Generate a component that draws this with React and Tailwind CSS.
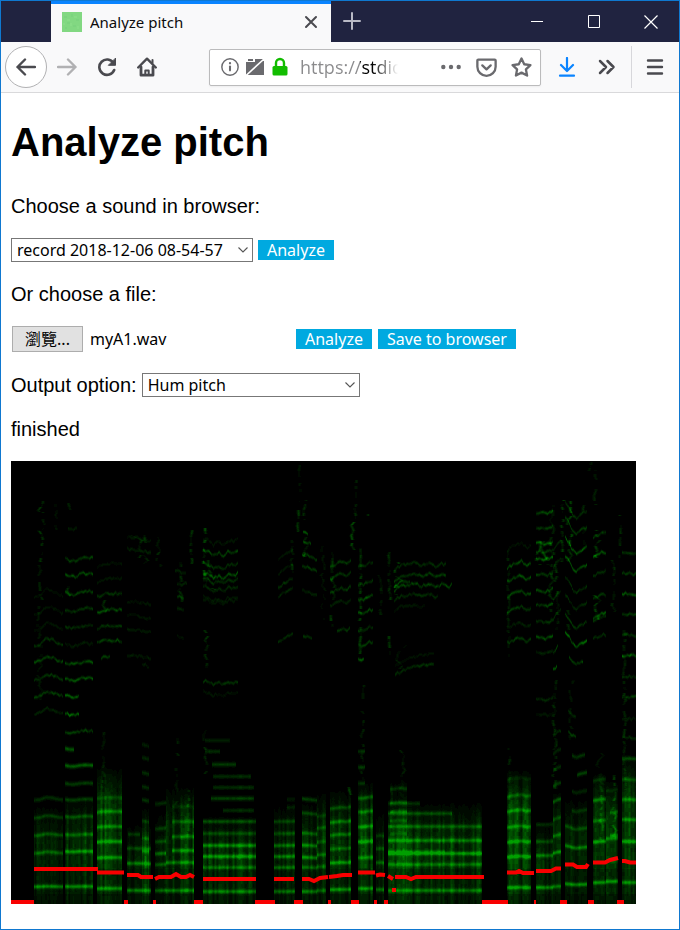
import { useMemo, useRef } from "react";

/* ---------- spectrogram ---------- */

const W = 625;
const H = 443;
const LEFT = 11;
const TOP = 461;
const CELL = 1;

// Each voice: x range, contour of the pitch (offsets along the note), haze level,
// top of the haze, and its harmonics as [y, strength, from?, to?].
const VOICES = [
  { x: [34, 63], c: [5, 3, -3, -2, 2, 4], haze: 0.2, top: 832, h: [[886, 0.75], [852, 0.5], [834, 0.45], [816, 0.35], [798, 0.3], [710, 0.16], [693, 0.3], [676, 0.3], [658, 0.34], [641, 0.25], [625, 0.1], [609, 0.1], [592, 0.08]] },
  { x: [65, 93], c: [0, 2, 2, 0, -1, -1, 0], haze: 0.3, top: 825, h: [[886, 0.75], [851, 0.8], [834, 0.5], [816, 0.45], [799, 0.4], [783, 0.4], [765, 0.65], [748, 0.6, 65, 74], [731, 0.3], [713, 0.5, 65, 79], [695, 0.45, 65, 79], [678, 0.42], [662, 0.38], [644, 0.14], [626, 0.22], [609, 0.28], [592, 0.3], [574, 0.38], [558, 0.3], [526, 0.16, 68, 77]] },
  { x: [97, 122], c: [3, 1, 0, 0, 0, 1], haze: 0.36, top: 795, h: [[888, 0.75], [857, 0.7], [841, 0.8], [826, 0.6], [811, 0.6], [797, 0.25], [656, 0.3, 101, 110], [640, 0.32], [625, 0.25], [609, 0.36], [593, 0.25], [578, 0.12], [563, 0.1]] },
  { x: [127, 151], c: [-1, -1, 0, 1, 2], haze: 0.17, top: 850, h: [[890, 0.65], [863, 0.6], [848, 0.35], [834, 0.3, 128, 140], [602, 0.12], [616, 0.12], [630, 0.14], [656, 0.14], [550, 0.16], [538, 0.13]] },
  { x: [142, 149], c: [-2, 2], haze: 0.34, top: 835, h: [[851, 0.5], [838, 0.4], [821, 0.3], [800, 0.35], [787, 0.3], [773, 0.3], [758, 0.25], [745, 0.2], [665, 0.15]] },
  { x: [155, 166], c: [2, 0, -2], haze: 0.2, top: 838, h: [[890, 0.6], [864, 0.5], [853, 0.6], [841, 0.4], [828, 0.35], [803, 0.3]] },
  { x: [166, 194], c: [2, 1, 0, 1, -1, 2], haze: 0.33, top: 815, h: [[890, 0.7], [862, 0.65], [850, 0.7, 172, 194], [836, 0.55, 172, 194], [821, 0.45, 172, 194], [806, 0.2, 172, 194], [571, 0.2, 175, 186], [583, 0.18, 177, 187], [596, 0.25, 177, 184], [608, 0.16, 177, 184], [636, 0.1, 177, 184]] },
  { x: [203, 256], c: [0, 0, 0, 0, 0, 0], haze: 0.32, top: 844, h: [[891, 0.65], [867, 0.5], [856, 0.8], [845, 0.75], [833, 0.4], [821, 0.5], [810, 0.3, 223, 254], [798, 0.45, 211, 254], [787, 0.3, 213, 254], [776, 0.3, 213, 251], [764, 0.4, 212, 236], [751, 0.3, 205, 220], [740, 0.22, 205, 230]] },
  { x: [203, 238], c: [-2, -1, 3, 0, 3, -1, 0, -2], haze: 0, top: 890, h: [[541, 0.12], [552, 0.32], [565, 0.25], [575, 0.42], [580, 0.24], [588, 0.2], [598, 0.13], [601, 0.1], [682, 0.26], [693, 0.1]] },
  { x: [274, 295], c: [1, 0, 0, -1], haze: 0.25, top: 832, h: [[891, 0.6], [867, 0.55], [856, 0.7], [845, 0.6], [833, 0.4], [821, 0.4], [807, 0.2, 287, 295], [799, 0.17, 287, 295]] },
  { x: [278, 293], c: [7, 3, 0, -2], haze: 0, top: 890, h: [[580, 0.25], [590, 0.2], [566, 0.12], [551, 0.12], [635, 0.2]] },
  { x: [302, 317], c: [-2, 0, 3], haze: 0.28, top: 830, h: [[891, 0.65], [867, 0.45], [857, 0.7], [845, 0.65], [833, 0.5], [813, 0.4], [799, 0.42], [637, 0.28, 303, 312], [592, 0.17], [568, 0.28], [556, 0.26], [543, 0.37, 303, 311], [534, 0.3, 303, 308]] },
  { x: [317, 326], c: [3, -1], haze: 0.33, top: 820, h: [[890, 0.5], [866, 0.4], [854, 0.5], [841, 0.35], [827, 0.4], [815, 0.25]] },
  { x: [330, 351], c: [4, 2, -1, 1, -3], haze: 0.29, top: 817, h: [[889, 0.8], [862, 0.8], [848, 0.45], [834, 0.5], [821, 0.6], [807, 0.4], [562, 0.26], [574, 0.28], [588, 0.25], [601, 0.16], [629, 0.27, 337, 350]] },
  { x: [358, 373], c: [2, 2, -1, -2], haze: 0.36, top: 810, h: [[888, 0.7], [857, 0.6], [841, 0.85], [826, 0.65], [811, 0.55], [797, 0.5], [782, 0.3, 358, 365], [766, 0.35, 358, 365], [750, 0.3, 358, 365], [564, 0.22], [582, 0.27], [597, 0.42], [611, 0.36], [628, 0.25], [643, 0.28], [657, 0.4, 358, 364]] },
  { x: [376, 384], c: [2, 0, 2], haze: 0.24, top: 840, h: [[889, 0.6], [862, 0.5], [848, 0.4], [835, 0.3]] },
  { x: [388, 482], c: [0, 0, 0, 0, 0], haze: 0.37, top: 830, h: [[890, 0.65], [864, 0.55], [853, 0.85], [851, 0.35, 388, 445], [840, 0.65], [826, 0.5], [813, 0.45, 388, 452], [803, 0.28, 388, 420]] },
  { x: [390, 407], c: [3, -1, 1], haze: 0.14, top: 805, h: [[788, 0.3], [802, 0.35], [811, 0.4], [820, 0.3], [833, 0.25]] },
  { x: [394, 455], c: [5, 0, 0, -2, 1, -2, 2, -1, 1, -3], haze: 0, top: 890, h: [[564, 0.22, 394, 446], [575, 0.31, 394, 446], [581, 0.3, 394, 410], [585, 0.34, 394, 452], [595, 0.23, 394, 438], [606, 0.12, 394, 425]] },
  { x: [395, 434], c: [10, 5, 1, -1, -3, -2], haze: 0, top: 890, h: [[666, 0.26], [656, 0.1]] },
  { x: [507, 531], c: [4, 1, -1, -2, 2, 0], haze: 0.36, top: 798, h: [[887, 0.8], [856, 0.8], [841, 0.7], [826, 0.6], [810, 0.55], [795, 0.4], [778, 0.14], [563, 0.36], [577, 0.4], [592, 0.36], [608, 0.3], [624, 0.15], [639, 0.33], [545, 0.1]] },
  { x: [536, 553], c: [0, 0, 1, 0, -2], haze: 0.28, top: 852, h: [[887, 0.75], [855, 0.6], [841, 0.4], [824, 0.28], [699, 0.18], [714, 0.1], [512, 0.36], [527, 0.3], [543, 0.45], [551, 0.26], [558, 0.5], [574, 0.34], [590, 0.33], [605, 0.32], [621, 0.25], [637, 0.42], [652, 0.18]] },
  { x: [553, 561], c: [4, -2, -5], haze: 0.35, top: 818, h: [[886, 0.7], [852, 0.8], [835, 0.6], [818, 0.4], [800, 0.55], [784, 0.4], [768, 0.3], [751, 0.25], [733, 0.2], [666, 0.4, 553, 557], [648, 0.32, 553, 558], [614, 0.22], [596, 0.2], [562, 0.18], [545, 0.18]] },
  { x: [565, 587], c: [-10, -6, 1, 4, 1, -1, -3], haze: 0.24, top: 826, h: [[884, 0.8], [847, 0.65], [828, 0.4], [810, 0.3, 572, 587], [791, 0.25, 572, 587], [773, 0.45, 577, 587], [755, 0.35, 572, 585], [735, 0.35, 568, 576], [714, 0.18, 568, 576], [513, 0.24], [529, 0.28], [549, 0.42], [567, 0.4], [588, 0.24], [605, 0.2], [624, 0.28], [642, 0.48], [661, 0.35, 569, 583]] },
  { x: [593, 606], c: [3, 1, -1, -1], haze: 0.26, top: 801, h: [[882, 0.75], [841, 0.75], [820, 0.5], [799, 0.6], [779, 0.25], [533, 0.3], [553, 0.42], [572, 0.26], [595, 0.28], [614, 0.48], [617, 0.28], [635, 0.2]] },
  { x: [606, 618], c: [1, 0, -3], haze: 0.3, top: 808, h: [[881, 0.8], [861, 0.3], [838, 0.55], [835, 0.5, 610, 618], [812, 0.45, 610, 618], [790, 0.2]] },
  { x: [622, 636], c: [0, 0, 1], haze: 0.32, top: 785, h: [[882, 0.75], [841, 0.9], [819, 0.65], [799, 0.6], [779, 0.4], [758, 0.45], [737, 0.2], [718, 0.14], [696, 0.28], [552, 0.25], [573, 0.3], [593, 0.4], [614, 0.32], [634, 0.33], [655, 0.5], [676, 0.22]] },
];

// Thin wandering traces: [x, yTop, yBottom, width, strength]
const STREAKS = [
  [40, 498, 512, 6, 0.3], [43, 512, 530, 3, 0.2], [40, 530, 562, 6, 0.34], [40, 565, 600, 5, 0.22],
  [39, 605, 700, 5, 0.14], [68, 503, 512, 4, 0.22], [56, 500, 530, 3, 0.16], [68, 586, 596, 3, 0.34],
  [104, 600, 618, 5, 0.3], [103, 730, 795, 3, 0.2], [136, 535, 560, 12, 0.24], [144, 535, 565, 8, 0.22],
  [158, 537, 568, 6, 0.28], [176, 735, 805, 4, 0.2], [188, 790, 835, 3, 0.26], [180, 562, 602, 6, 0.28],
  [191, 530, 573, 2, 0.3], [204, 528, 585, 3, 0.46], [206, 630, 668, 4, 0.3], [205, 730, 780, 5, 0.22],
  [211, 560, 590, 12, 0.28], [297, 510, 532, 3, 0.36], [299, 462, 505, 3, 0.14], [304, 500, 520, 4, 0.22],
  [305, 530, 557, 5, 0.5], [292, 535, 575, 4, 0.25], [333, 550, 600, 5, 0.34], [332, 615, 627, 4, 0.38],
  [353, 508, 550, 5, 0.42], [355, 475, 507, 3, 0.22], [360, 548, 660, 2, 0.34], [379, 575, 615, 4, 0.22],
  [367, 514, 518, 5, 0.25], [323, 540, 620, 5, 0.12], [349, 787, 795, 3, 0.36], [389, 550, 600, 3, 0.28],
  [389, 635, 655, 2, 0.34], [397, 562, 595, 9, 0.45], [401, 645, 675, 14, 0.16], [391, 780, 830, 3, 0.2],
  [402, 750, 800, 6, 0.2], [362, 685, 780, 5, 0.18], [508, 550, 660, 3, 0.24], [509, 748, 800, 3, 0.24],
  [538, 541, 565, 8, 0.38], [545, 541, 565, 8, 0.38], [551, 505, 620, 5, 0.26], [562, 500, 562, 3, 0.4],
  [556, 560, 630, 4, 0.3], [569, 500, 562, 5, 0.4], [584, 505, 545, 6, 0.24], [567, 610, 630, 4, 0.34],
  [595, 470, 505, 3, 0.22], [589, 462, 475, 4, 0.16], [597, 530, 560, 5, 0.36], [597, 595, 620, 7, 0.38],
  [620, 515, 560, 2, 0.3], [613, 560, 615, 4, 0.22], [554, 680, 790, 4, 0.26], [571, 680, 740, 6, 0.15],
  [601, 775, 840, 3, 0.34], [614, 775, 840, 4, 0.34], [624, 630, 790, 3, 0.24], [600, 752, 785, 8, 0.14],
];

const PITCH = [
  "M34 869H96V867", "M97 872.5H124", "M127 875H138L141 877H153",
  "M155 879L159 877L171 877L176 874L181 877H186L190 875L194 877",
  "M203 879H256", "M274 879H294", "M302 879H309L314 881L320 878L328 877",
  "M329 877L337 876L343 875H352", "M358 872.5H375", "M376 875.5L380 874.5L385 875",
  "M388 876L393 879", "M395 877H406L411 879L416 877H484", "M507 872.5H516L519 871L523 873H534",
  "M536 871H551L556 868.5H561", "M565 864.5H573L577 867H586L588 864",
  "M593 862.5H605L610 860L618 858", "M622 861H625L630 862.5H636",
];

const RESTS = [
  [11, 34], [124, 128], [153, 156], [194, 203], [255, 275], [294, 303], [328, 331], [351, 359],
  [374, 377], [384, 388], [482, 508], [534, 536], [560, 567], [588, 594], [617, 624],
];

function hash(a, b) {
  const n = Math.sin(a * 12.9898 + b * 78.233) * 43758.5453;
  return n - Math.floor(n);
}

// Hash values blended between neighbouring two-pixel columns.
function noise(x, b) {
  const p = x / 2;
  const i = Math.floor(p);
  return hash(i, b) + (hash(i + 1, b) - hash(i, b)) * (p - i);
}

function contourAt(points, t) {
  const p = t * (points.length - 1);
  const i = Math.min(points.length - 2, Math.floor(p));
  return points[i] + (points[i + 1] - points[i]) * (p - i);
}

function buildLevels() {
  const cols = Math.ceil(W / CELL);
  const grid = new Float32Array(cols * H);
  const add = (col, row, v) => {
    if (col >= 0 && col < cols && row >= 0 && row < H) grid[row * cols + col] += v;
  };

  VOICES.forEach(({ x: [x0, x1], c, haze, top, h }, vi) => {
    for (let x = x0; x < x1; x += CELL) {
      const col = Math.floor((x - LEFT) / CELL);
      const t = (x - x0) / (x1 - x0);
      const column = noise(col, vi);
      for (let y = top - 30; haze > 0 && y < 904; y++) {
        const fade = Math.min(1, Math.max(0, (y - top + 30) / 40));
        const belly = y > 893 ? 0.5 : y > 868 ? 0.75 : 1;
        add(col, y - TOP, haze * 1.25 * fade * belly * (0.3 + 0.9 * column) * (0.75 + 0.4 * noise(col, y >> 2)));
      }
      h.forEach(([y, strength, from = x0, to = x1], hi) => {
        if (x < from || x >= to) return;
        const high = y < 740;
        const scale = Math.min(1.15, (904 - y) / 300);
        const centre = y + contourAt(c, t) * scale + (high ? (noise(col, hi) - 0.5) * 2.4 : 0);
        const gate = high ? 0.6 + 0.7 * noise(col + 31, hi + vi) : 0.8 + 0.3 * column;
        const spread = high ? 1.5 : 2;
        for (let r = -5; r <= 5; r++) {
          const row = Math.round(centre) + r;
          const d = (row - centre) / spread;
          add(col, row - TOP, strength * gate * (high ? 1.05 : 0.88) * Math.exp(-d * d));
        }
      });
    }
  });

  STREAKS.forEach(([x, y0, y1, w, strength], si) => {
    for (let y = y0; y < y1; y++) {
      const step = y / 5;
      const i = Math.floor(step);
      const wander = hash(si, i) + (hash(si, i + 1) - hash(si, i)) * (step - i);
      const glow = Math.max(0, hash(si + 50, Math.floor(y / 3)) - 0.2) * 1.3;
      const centre = x - LEFT + (wander - 0.5) * w;
      for (let dx = -3; dx <= 3; dx++) {
        const col = Math.round(centre) + dx;
        const d = (col - centre) / 1.4;
        add(col, y - TOP, strength * glow * Math.exp(-d * d));
      }
    }
  });

  const paths = Array.from({ length: 17 }, () => "");
  for (let row = 0; row < H; row++) {
    let col = 0;
    while (col < cols) {
      const level = Math.min(16, Math.round(grid[row * cols + col] * 16));
      let end = col + 1;
      while (end < cols && Math.min(16, Math.round(grid[row * cols + end] * 16)) === level) end++;
      if (level > 0) paths[level] += `M${col * CELL} ${row}h${(end - col) * CELL}v1H${col * CELL}z`;
      col = end;
    }
  }
  return paths;
}

function Spectrogram() {
  const levels = useMemo(buildLevels, []);
  return (
    <svg
      viewBox={`0 0 ${W} ${H}`}
      className="block h-auto w-[625px] max-w-full bg-black"
      role="img"
      aria-label="Spectrogram"
    >
      <g shapeRendering="crispEdges">
        {levels.map((d, i) => d && <path key={i} d={d} fill={`rgb(0,${i * 10},0)`} />)}
      </g>
      <g transform={`translate(${-LEFT} ${-TOP})`}>
        <g fill="none" stroke="#f80000" strokeWidth="4">
          {PITCH.map((d) => <path key={d} d={d} />)}
        </g>
        <g fill="#f80000">
          {RESTS.map(([a, b]) => <rect key={a} x={a} y="900" width={b - a} height="4" />)}
          <rect x="392" y="888" width="4" height="4" />
        </g>
      </g>
    </svg>
  );
}

/* ---------- icons ---------- */

function Icon({ size = 20, className = "", children }) {
  return (
    <svg
      width={size}
      height={size}
      viewBox="0 0 20 20"
      fill="none"
      stroke="currentColor"
      strokeWidth="2"
      strokeLinecap="round"
      strokeLinejoin="round"
      className={`shrink-0 ${className}`}
      aria-hidden="true"
    >
      {children}
    </svg>
  );
}

function ToolButton({ label, className = "text-[#4a4a4f]", children }) {
  return (
    <button type="button" aria-label={label} className={`flex h-10 w-10 shrink-0 items-center justify-center ${className}`}>
      {children}
    </button>
  );
}

function TitleBar() {
  return (
    <div className="flex h-[41px] items-stretch bg-[#202340] pl-[50px]">
      <div className="flex w-[280px] items-center border-t-[3px] border-[#0a84ff] bg-[#f9f9fa] pr-[10px] pb-[3px] pl-[11px]">
        <svg width="20" height="20" viewBox="0 0 20 20" className="shrink-0" aria-hidden="true">
          <rect width="20" height="20" fill="#82d882" />
          <path d="M2 4h3v2H2zM9 2h2v3H9zM14 7h3v2h-3zM5 10h3v2H5zM11 13h3v2h-3zM3 15h2v2H3z" fill="#7cd47f" />
          <path d="M5 7h3v2H5zM12 4h3v2h-3zM8 11h2v3H8zM15 14h2v3h-2zM1 11h2v2H1z" fill="#88dc87" />
        </svg>
        <span className="ml-2 flex-1 truncate font-['Noto_Sans',sans-serif] text-[15px] leading-5 text-[#0c0c0d]">Analyze pitch</span>
        <button type="button" aria-label="Close tab" className="text-[#4a4a4f]">
          <Icon><path d="M5 5l10 10M15 5L5 15" /></Icon>
        </button>
      </div>
      <button type="button" aria-label="New tab" className="w-[42px] pb-[2px] pl-[11px] text-[#b9bac6]">
        <Icon><path d="M10 2v16M2 10h16" /></Icon>
      </button>
      <div className="ml-auto flex">
        <button type="button" aria-label="Minimize" className="flex w-[57px] items-center justify-center text-white">
          <svg width="12" height="12" viewBox="0 0 12 12" aria-hidden="true"><path d="M0 5.5h12" stroke="currentColor" /></svg>
        </button>
        <button type="button" aria-label="Maximize" className="flex w-[57px] items-center justify-center text-white">
          <svg width="12" height="13" viewBox="0 0 12 13" fill="none" aria-hidden="true"><path d="M.5.5h11v12H.5z" stroke="currentColor" /></svg>
        </button>
        <button type="button" aria-label="Close window" className="flex w-[57px] items-center justify-center text-white">
          <svg width="14" height="14" viewBox="0 0 14 14" fill="none" aria-hidden="true"><path d="M.5.5l13 13M13.5.5l-13 13" stroke="currentColor" strokeWidth="1.2" /></svg>
        </button>
      </div>
    </div>
  );
}

function AddressBar() {
  return (
    <div className="ml-[42px] flex h-[37px] min-w-0 flex-1 items-center rounded-xs border border-[#bbbbbc] bg-white px-[8px] text-[#6a6a6e] shadow-xs">
      <Icon size={24}>
        <circle cx="10" cy="10" r="6.8" strokeWidth="1.2" />
        <path d="M10 9.5v3.3" strokeWidth="1.7" />
        <path d="M10 6.8v.1" strokeWidth="1.9" />
      </Icon>
      <svg width="18" height="18" viewBox="0 0 18 18" fill="currentColor" className="ml-1 shrink-0" aria-hidden="true">
        <path d="M2 1h5v2H2zM9 1h8v2h1v14H0V4h9z" />
        <path d="M0 17.500L18 1" stroke="#fff" strokeWidth="1.600" />
      </svg>
      <svg width="18" height="20" viewBox="0 0 18 20" className="ml-[7px] shrink-0 text-[#12bc00]" aria-hidden="true">
        <rect x="1.500" y="9" width="15" height="9.500" rx="1.500" fill="currentColor" />
        <path d="M5 10V6a4 4 0 0 1 8 0v4" fill="none" stroke="currentColor" strokeWidth="2.400" />
      </svg>
      <input
        type="text"
        aria-label="Address"
        defaultValue="https://stdio"
        className="ml-[11px] h-[30px] w-[124px] min-w-0 bg-[linear-gradient(90deg,#8a8a8c_60px,#000_60px,#000_72px,transparent_98px)] bg-clip-text text-[18px] leading-[30px] text-transparent outline-none"
      />
      <div className="ml-auto flex items-center gap-[14px]">
        <button type="button" aria-label="Page actions" className="block">
          <Icon size={22}>
            <g fill="currentColor" stroke="none"><circle cx="3" cy="10" r="2" /><circle cx="10" cy="10" r="2" /><circle cx="17" cy="10" r="2" /></g>
          </Icon>
        </button>
        <button type="button" aria-label="Save to Pocket" className="block">
          <Icon size={21}>
            <path d="M2.200 2.500h15.600a.9.9 0 0 1 .9.900v5.800a8.700 8.700 0 0 1-17.400 0V3.400a.9.9 0 0 1 .9-.9z" strokeWidth="2.200" />
            <path d="M6 8l4 3.800L14 8" strokeWidth="2.200" />
          </Icon>
        </button>
        <button type="button" aria-label="Bookmark this page" className="block">
          <Icon size={21}>
            <path d="M10 1.500l2.600 5.400 5.900.8-4.300 4.100 1.100 5.900L10 14.900l-5.300 2.800 1.100-5.900-4.300-4.100 5.900-.8z" strokeWidth="2.200" />
          </Icon>
        </button>
      </div>
    </div>
  );
}

function Toolbar() {
  return (
    <div className="flex h-[51px] items-center border-b border-[#d9d9db] bg-[#f9f9fa] pr-1 pl-1">
      <button type="button" aria-label="Back" className="flex size-[42px] shrink-0 items-center justify-center rounded-full border border-[#b1b1b3] bg-white text-[#4a4a4f]">
        <Icon><path d="M19 10H1.500M9 2.500L1.500 10 9 17.500" strokeWidth="2.400" /></Icon>
      </button>
      <ToolButton label="Forward" className="text-[#b1b1b3]">
        <Icon><path d="M1 10h17.500M11 2.500l7.500 7.500-7.500 7.500" strokeWidth="2.400" /></Icon>
      </ToolButton>
      <ToolButton label="Reload">
        <Icon><path d="M17.200 13A7.700 7.700 0 1 1 16.500 6" strokeWidth="2.600" /><path d="M18.500 1.500v6.800h-6.800z" fill="currentColor" strokeWidth="1" /></Icon>
      </ToolButton>
      <ToolButton label="Home">
        <Icon>
          <path d="M1.200 10.500L10 1.700l8.800 8.800" strokeWidth="2.400" />
          <path d="M4 10v8.200h12V10" strokeWidth="2.800" />
          <path d="M8.300 18v-4.500h3.400V18" strokeWidth="2" />
          <path d="M15.500 3v3" strokeWidth="2" />
        </Icon>
      </ToolButton>
      <AddressBar />
      <ToolButton label="Downloads" className="ml-[6px] text-[#0a84ff]">
        <Icon><path d="M10 1v12.500M4 8l6 6 6-6M3 18.700h14" strokeWidth="2.200" /></Icon>
      </ToolButton>
      <ToolButton label="More tools">
        <Icon><path d="M3 4l6 6-6 6M10.500 4l6 6-6 6" strokeWidth="2.500" /></Icon>
      </ToolButton>
      <div className="ml-1 h-[42px] w-px bg-[#d7d7db]" />
      <ToolButton label="Open menu" className="ml-[3px] text-[#4a4a4f]">
        <Icon><path d="M3 3.500h14M3 10h14M3 16.500h14" strokeWidth="2.400" /></Icon>
      </ToolButton>
    </div>
  );
}

/* ---------- page ---------- */

function BlueButton({ children }) {
  return (
    <button type="button" className="h-5 bg-[#00a9e0] px-[9px] font-['Noto_Sans',sans-serif] text-[16px] leading-5 whitespace-nowrap text-white">
      {children}
    </button>
  );
}

function Select({ id, label, width, children }) {
  return (
    <div className={`relative ${width}`}>
      <select
        id={id}
        aria-label={label}
        className="block h-6 w-full appearance-none border border-[#777] bg-white pl-[5px] font-['Noto_Sans',sans-serif] text-[16px] leading-[22px] text-black"
      >
        {children}
      </select>
      <svg width="10" height="6" viewBox="0 0 10 6" fill="none" className="pointer-events-none absolute top-[9px] right-[5px]" aria-hidden="true">
        <path d="M.5.5L5 5 9.500.5" stroke="#555" strokeWidth="1.100" />
      </svg>
    </div>
  );
}

export default function App() {
  const fileInput = useRef(null);
  return (
    <div className="min-h-screen border border-[#0f78d0] bg-white font-['Open_Sans','Noto_Sans',sans-serif]">
      <header>
        <TitleBar />
        <Toolbar />
      </header>
      <main className="flex flex-col items-start gap-5 px-[10px] pt-[26px] pb-6 font-['Liberation_Sans',Arial,sans-serif] text-[20px] leading-6 text-black">
        <h1 className="mb-[9px] text-[40px] leading-[46px] font-bold">Analyze pitch</h1>
        <p>Choose a sound in browser:</p>
        <div className="flex items-center gap-[5px]">
          <Select label="Sound in browser" width="w-[242px]">
            <option>record 2018-12-06 08-54-57</option>
          </Select>
          <BlueButton>Analyze</BlueButton>
        </div>
        <p>Or choose a file:</p>
        <div className="flex h-[27px] items-start gap-[6px]">
          <div className="flex w-[279px] items-center gap-[7px] pl-px font-['Noto_Sans','Noto_Sans_CJK_TC',sans-serif] text-[16px]">
            <input ref={fileInput} type="file" aria-label="Sound file" className="hidden" />
            <button
              type="button"
              onClick={() => fileInput.current?.click()}
              className="h-[26px] w-[71px] border border-[#adadad] bg-[#e1e1e1] leading-6"
            >
              瀏覽...
            </button>
            <span>myA1.wav</span>
          </div>
          <div className="flex gap-[6px] pt-[3px]">
            <BlueButton>Analyze</BlueButton>
            <BlueButton>Save to browser</BlueButton>
          </div>
        </div>
        <div className="flex items-center gap-[5px]">
          <label htmlFor="output">Output option:</label>
          <Select id="output" width="w-[218px]">
            <option>Hum pitch</option>
          </Select>
        </div>
        <p>finished</p>
        <Spectrogram />
      </main>
    </div>
  );
}
